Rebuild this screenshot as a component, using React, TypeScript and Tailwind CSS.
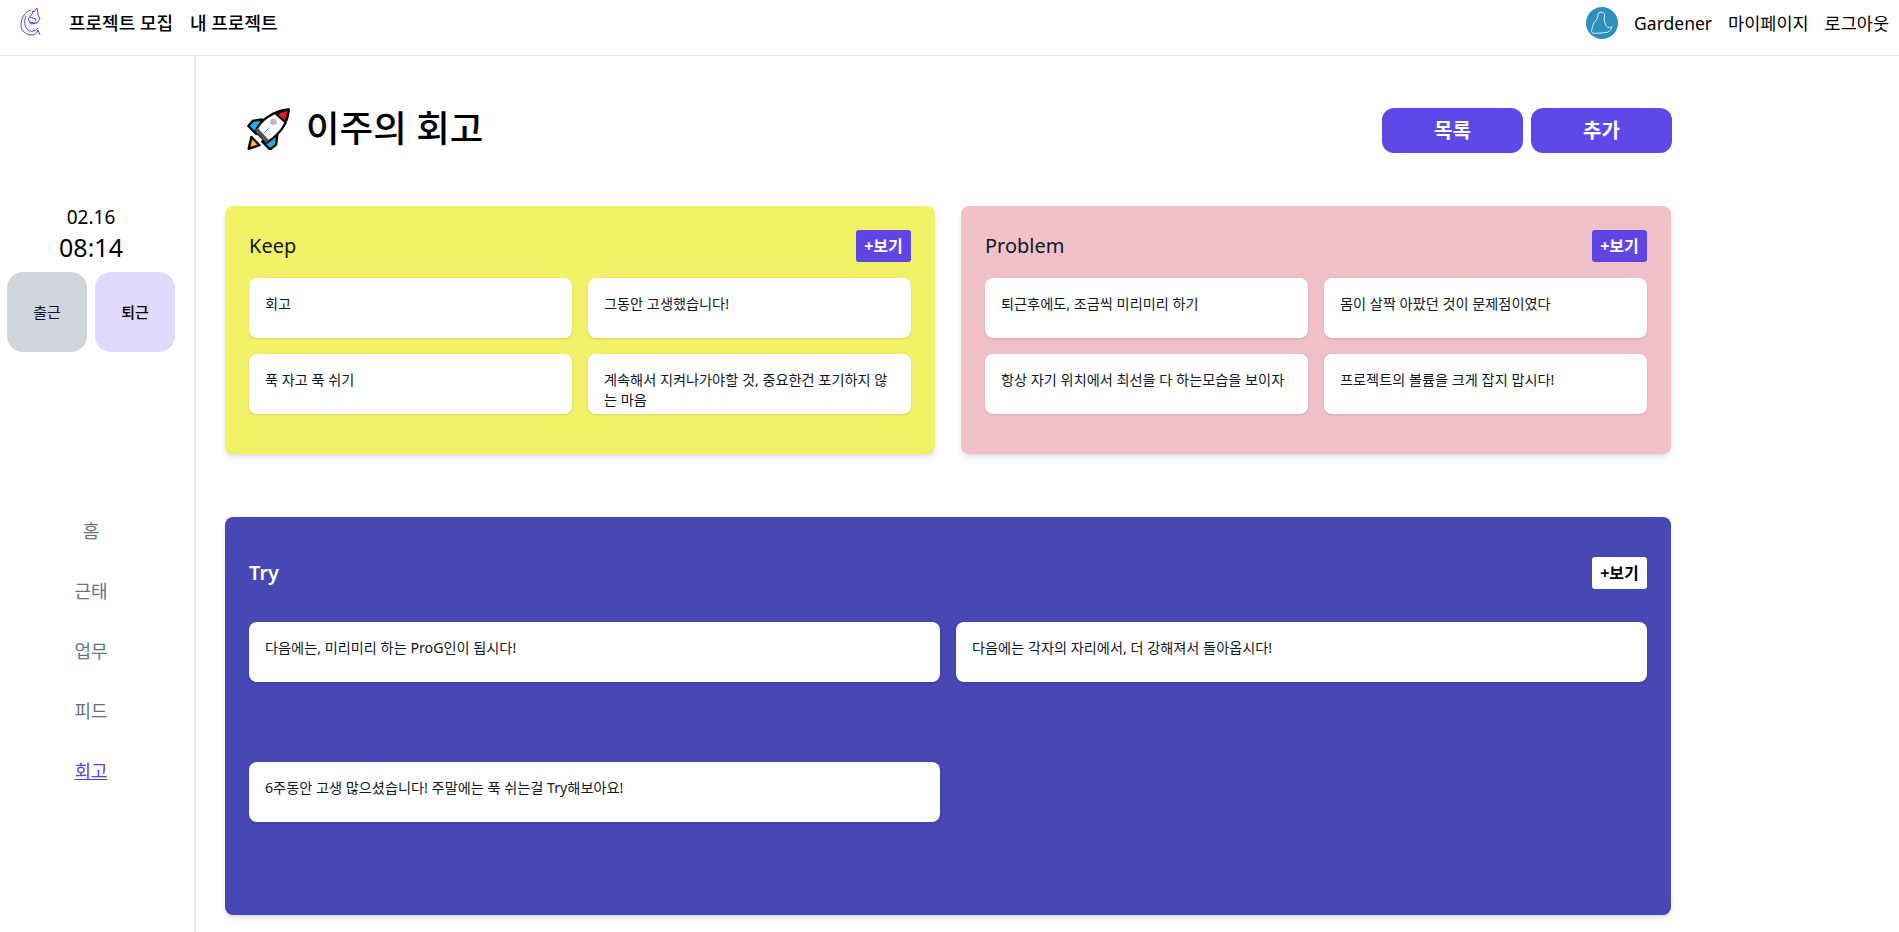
import type { ReactNode } from 'react'

const font = { fontFamily: '"Noto Sans", "Noto Sans CJK KR", sans-serif' }

function Logo() {
  return (
    <svg width="21" height="29" viewBox="0 0 21 29" fill="none" stroke="#5b3ff0" strokeWidth="1" className="shrink-0 mb-1">
      <path d="M11 3C4 5 1 12 1 18c0 6 5 10 11 10 3 0 5-2 6-5l2 5" />
      <path d="M6 9c-2 5-2 10 2 14 3 2 7 2 10-2" />
      <path d="M12 7l1-3 1 1 3-4 1 7 2 4-3 4-6 1-3-5z" />
      <path d="M10 10l6 2-1 2M9 15l6 1" />
    </svg>
  )
}

function Avatar() {
  return (
    <div className="w-8 h-8 rounded-full bg-[#2e8fbd] shrink-0">
      <svg width="32" height="32" viewBox="0 0 32 32" fill="none" stroke="#dff1f7" strokeWidth="1">
        <path d="M15 5c2 .5 3.500 1 3.500 2.500 0 2-.5 4.500 0 6.500 .5 3 1.500 5 3.200 6.300 1.500 .4 3-.2 4.300-.6-.5 2.500-2.500 4.500-4.300 5.600-4 .6-9 1-13.400 1-2 0-3-1.300-2.600-2.600 .3-3 1.200-6 2.600-8.400 1.500-1.800 2.800-3 3.400-5 .2-1.500 0-3 1-4.400z" />
      </svg>
    </div>
  )
}

function Rocket() {
  return (
    <svg width="43" height="42" viewBox="20 26 130 126" className="shrink-0">
      <path d="M25 149l8-36 25 25z" fill="#f7941d" stroke="#000" strokeWidth="7" strokeLinejoin="round" />
      <path d="M34 140l5-16 11 11z" fill="#ffcb2e" />
      <path d="M66 60L38 64 24 80l24 24z" fill="#1cb0e8" stroke="#000" strokeWidth="7" strokeLinejoin="round" />
      <path d="M112 104l-4 32-18 15-24-24z" fill="#1cb0e8" stroke="#000" strokeWidth="7" strokeLinejoin="round" />
      <path d="M46 96C58 66 96 34 146 30c-2 48-38 82-66 100z" fill="#fff" stroke="#000" strokeWidth="7" strokeLinejoin="round" />
      <path d="M108 44c12-7 25-12 38-14-1 12-5 27-11 38z" fill="#e81224" stroke="#000" strokeWidth="6" strokeLinejoin="round" />
      <path d="M44 94l34 37 9-7-34-38z" fill="#555" />
      <circle cx="100" cy="68" r="10" fill="#b8b8b8" />
      <path d="M70 102l18-17" stroke="#1cb0e8" strokeWidth="3" />
    </svg>
  )
}

function NoteCard({ children }: { children: ReactNode }) {
  return (
    <div className="h-[60px] bg-white rounded-lg shadow-sm p-4 text-[14.2px] leading-5 text-gray-900 overflow-hidden break-all">
      {children}
    </div>
  )
}

function ViewButton({ light }: { light?: boolean }) {
  return (
    <button className={`h-8 w-[55px] rounded-[3px] text-base font-bold ${light ? 'bg-white text-black' : 'bg-[#5f46e4] text-white'}`}>
      +보기
    </button>
  )
}

function RetroSection({ title, items, bg, hidden }: { title: string; items: string[]; bg: string; hidden: number }) {
  return (
    <section className={`h-[248px] rounded-lg shadow-md px-6 pt-6 ${bg}`}>
      <div className="flex items-center justify-between mb-4">
        <h2 className="text-xl text-gray-900">{title}</h2>
        <ViewButton />
      </div>
      <div className="grid grid-cols-2 gap-4">
        {items.map((t) => (
          <NoteCard key={t}>{t}</NoteCard>
        ))}
        {Array.from({ length: hidden }).map((_, i) => (
          <div key={i} className="h-0 shadow-xs opacity-30" />
        ))}
      </div>
    </section>
  )
}

export default function App() {
  return (
    <div className="h-[932px] overflow-hidden bg-white flex flex-col" style={font}>
      {/* Header */}
      <header className="h-14 shrink-0 border-b border-gray-200 flex items-center pl-5 pr-2.5 pb-[9px]">
        <Logo />
        <nav className="flex gap-[17px] ml-[28px] text-[18px] font-medium text-black">
          <a>프로젝트 모집</a>
          <a>내 프로젝트</a>
        </nav>
        <div className="ml-auto flex items-center gap-4 text-[17.5px] text-black">
          <Avatar />
          <span>Gardener</span>
          <a>마이페이지</a>
          <a>로그아웃</a>
        </div>
      </header>

      <div className="flex flex-1 min-h-0">
        {/* Sidebar */}
        <aside className="w-[196px] shrink-0 border-r-2 border-gray-200 pl-[7px] pr-[19px] pt-[147px] flex flex-col items-center">
          <div className="text-[19px] text-black leading-7">02.16</div>
          <div className="text-[25px] text-black leading-8">08:14</div>
          <div className="flex gap-2 mt-[9px]">
            <button className="w-20 h-20 rounded-2xl bg-gray-300 text-[15px] text-gray-900">출근</button>
            <button className="w-20 h-20 rounded-2xl bg-[#e0d9fb] text-[15px] font-medium text-black">퇴근</button>
          </div>
          <nav className="mt-[165px] flex flex-col items-center gap-[32px] text-lg leading-7 text-gray-500">
            <a>홈</a>
            <a>근태</a>
            <a>업무</a>
            <a>피드</a>
            <a className="text-[#5b3ff0] underline">회고</a>
          </nav>
        </aside>

        {/* Main */}
        <main className="flex-1 pl-[29px]">
          <div className="w-[1446px]">
            <div className="flex items-center justify-between h-[45px] mt-[52px] mb-[53px]">
              <div className="flex items-center gap-4 pl-[22px] -mt-1">
                <Rocket />
                <h1 className="text-[36.5px] font-medium text-black">이주의 회고</h1>
              </div>
              <div className="flex gap-2 -mr-px">
                <button className="w-[141px] h-[45px] rounded-xl bg-[#5f48e8] text-white text-xl font-bold">목록</button>
                <button className="w-[141px] h-[45px] rounded-xl bg-[#5f48e8] text-white text-xl font-bold">추가</button>
              </div>
            </div>

            <div className="grid grid-cols-2 gap-[26px]">
              <RetroSection
                title="Keep"
                bg="bg-[#f1f268]"
                hidden={2}
                items={['회고', '그동안 고생했습니다!', '푹 자고 푹 쉬기', '계속해서 지켜나가야할 것, 중요한건 포기하지 않는 마음']}
              />
              <RetroSection
                title="Problem"
                bg="bg-[#f0c1c9]"
                hidden={1}
                items={['퇴근후에도, 조금씩 미리미리 하기', '몸이 살짝 아팠던 것이 문제점이였다', '항상 자기 위치에서 최선을 다 하는모습을 보이자', '프로젝트의 볼륨을 크게 잡지 맙시다!']}
              />
            </div>

            <section className="mt-[63px] h-[398px] rounded-lg shadow-md bg-[#4747b5] px-6 pt-10">
              <div className="flex items-center justify-between mb-[33px]">
                <h2 className="text-xl font-semibold text-white">Try</h2>
                <ViewButton light />
              </div>
              <div className="grid grid-cols-2 gap-x-4 gap-y-[80px]">
                <NoteCard>다음에는, 미리미리 하는 ProG인이 됩시다!</NoteCard>
                <NoteCard>다음에는 각자의 자리에서, 더 강해져서 돌아옵시다!</NoteCard>
                <NoteCard>6주동안 고생 많으셨습니다! 주말에는 푹 쉬는걸 Try해보아요!</NoteCard>
              </div>
            </section>
          </div>
        </main>
      </div>
    </div>
  )
}
